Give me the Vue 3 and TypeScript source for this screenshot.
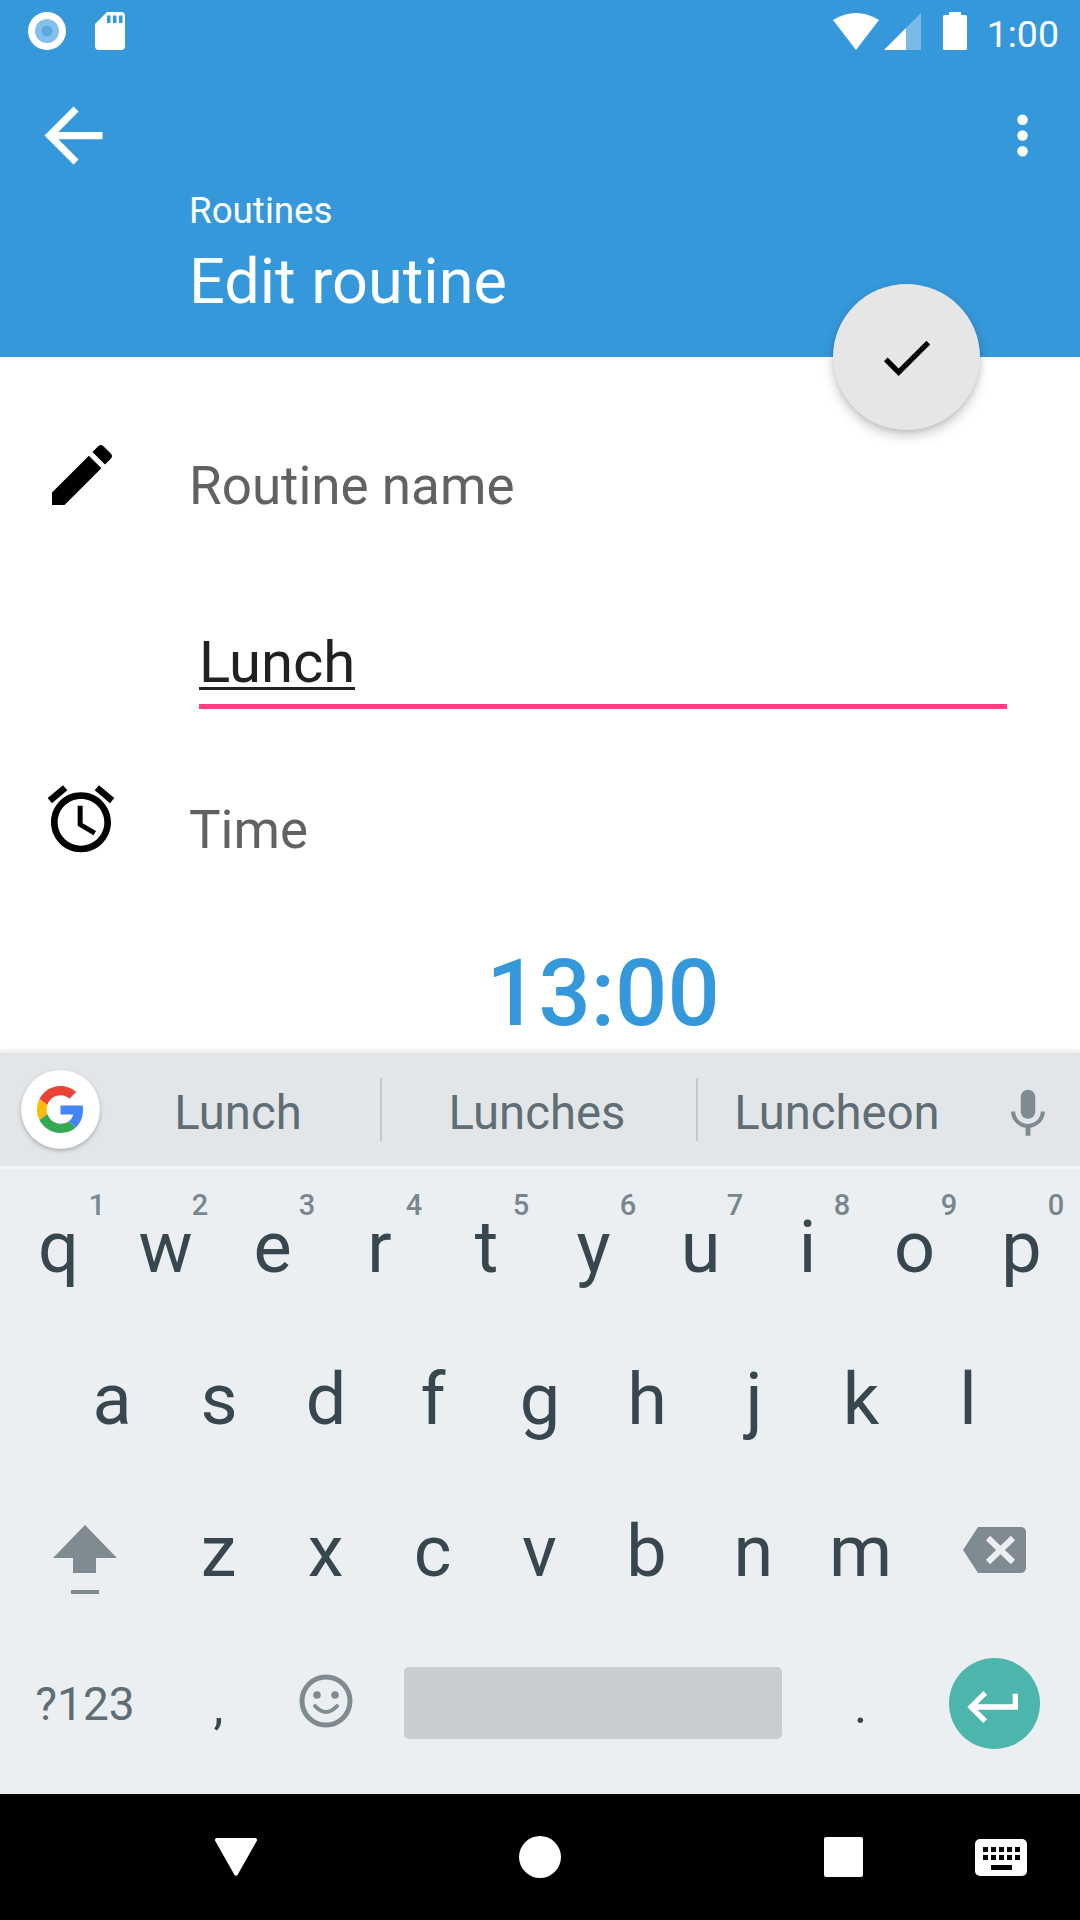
<script setup lang="ts">
const topRow: { l: string; d: string }[] = [
  { l: 'q', d: '1' }, { l: 'w', d: '2' }, { l: 'e', d: '3' }, { l: 'r', d: '4' }, { l: 't', d: '5' },
  { l: 'y', d: '6' }, { l: 'u', d: '7' }, { l: 'i', d: '8' }, { l: 'o', d: '9' }, { l: 'p', d: '0' },
]
const midRow: string[] = ['a', 's', 'd', 'f', 'g', 'h', 'j', 'k', 'l']
const lowRow: string[] = ['z', 'x', 'c', 'v', 'b', 'n', 'm']
</script>

<template>
  <div class="screen">
    <header class="appbar">
      <div class="status">
        <svg class="st-icon rec" width="38" height="38" viewBox="0 0 38 38">
          <circle cx="19" cy="19" r="19" fill="#fff" />
          <circle cx="19" cy="19" r="12" fill="#85bfea" />
          <circle cx="19" cy="19" r="5.5" fill="#5aa9e3" />
        </svg>
        <svg class="st-icon sd" width="30" height="38" viewBox="0 0 30 38">
          <path fill="#fff" d="M12 0H26a4 4 0 0 1 4 4V34a4 4 0 0 1-4 4H4a4 4 0 0 1-4-4V12Z" />
          <path fill="#3498db" d="M12 3.500h3.500V11H12ZM18 3.500h3.500V11H18ZM24 3.500h3.500V11H24Z" />
        </svg>
        <div class="spacer"></div>
        <svg class="st-icon" width="46" height="38" viewBox="0 0 46 38">
          <path fill="#fff" d="M0 8Q23-6 46 8L23 38Z" />
        </svg>
        <svg class="st-icon signal" width="37" height="38" viewBox="0 0 37 38">
          <path fill="#7ab9e8" d="M22 16 37 1V38H22Z" />
          <path fill="#fff" d="M0 38 22 16V38Z" />
        </svg>
        <svg class="st-icon battery" width="24" height="38" viewBox="0 0 24 38">
          <path fill="#fff" d="M6 0H18V3H22.500A1.500 1.500 0 0 1 24 4.500V36.500A1.500 1.500 0 0 1 22.500 38H1.500A1.500 1.500 0 0 1 0 36.500V4.500A1.500 1.500 0 0 1 1.500 3H6Z" />
        </svg>
        <span class="clock">1:00</span>
      </div>
      <div class="toolbar">
        <svg class="back" width="87" height="87" viewBox="0 0 24 24">
          <path fill="#fff" d="M20 11H7.830l5.590-5.590L12 4l-8 8 8 8 1.410-1.410L7.830 13H20v-2z" />
        </svg>
        <div class="spacer"></div>
        <svg class="more" width="63" height="63" viewBox="0 0 24 24">
          <circle cx="12" cy="6" r="2" fill="#fff" />
          <circle cx="12" cy="12" r="2" fill="#fff" />
          <circle cx="12" cy="18" r="2" fill="#fff" />
        </svg>
      </div>
      <div class="titles">
        <div class="crumb">Routines</div>
        <div class="title">Edit routine</div>
      </div>
      <button class="fab" type="button" aria-label="Save">
        <svg width="63" height="63" viewBox="0 0 24 24">
          <path fill="#000" d="M9 16.170L4.830 12l-1.410 1.410L9 19 21 7l-1.410-1.410z" />
        </svg>
      </button>
    </header>

    <main class="form">
      <div class="row name-row">
        <svg class="row-icon" width="80" height="80" viewBox="0 0 24 24">
          <path fill="#000" d="M3 17.250V21h3.750L17.810 9.940l-3.750-3.750L3 17.250zM20.710 7.040c.39-.39.39-1.020 0-1.410l-2.340-2.340c-.39-.39-1.020-.39-1.410 0l-1.830 1.830 3.750 3.750 1.830-1.830z" />
        </svg>
        <span class="label">Routine name</span>
      </div>
      <div class="field"><span class="composing">Lunch</span></div>
      <div class="row time-row">
        <svg class="row-icon" width="80" height="80" viewBox="0 0 24 24">
          <path fill="#000" d="M22 5.720l-4.600-3.860-1.290 1.530 4.600 3.860L22 5.720zM7.880 3.390L6.600 1.860 2 5.710l1.290 1.530 4.590-3.850zM12.500 8H11v6l4.750 2.850.75-1.230-4-2.370V8zM12 4c-4.970 0-9 4.030-9 9s4.030 9 9 9c4.970 0 9-4.030 9-9s-4.030-9-9-9zm0 16c-3.870 0-7-3.130-7-7s3.130-7 7-7 7 3.130 7 7-3.130 7-7 7z" />
        </svg>
        <span class="label">Time</span>
      </div>
      <div class="time-value">13:00</div>
    </main>

    <section class="keyboard">
      <div class="strip">
        <div class="g-btn">
          <svg width="47" height="47" viewBox="0 0 48 48">
            <path fill="#EA4335" d="M24 9.500c3.540 0 6.710 1.220 9.210 3.600l6.850-6.850C35.900 2.380 30.470 0 24 0 14.620 0 6.510 5.380 2.560 13.220l7.980 6.190C12.430 13.720 17.740 9.500 24 9.500z" />
            <path fill="#4285F4" d="M46.980 24.550c0-1.570-.15-3.090-.38-4.550H24v9.020h12.940c-.58 2.960-2.260 5.480-4.780 7.180l7.730 6c4.510-4.180 7.090-10.360 7.090-17.650z" />
            <path fill="#FBBC05" d="M10.530 28.590c-.48-1.450-.76-2.990-.76-4.590s.27-3.140.76-4.590l-7.980-6.190C.92 16.460 0 20.120 0 24c0 3.880.92 7.540 2.560 10.780l7.970-6.190z" />
            <path fill="#34A853" d="M24 48c6.480 0 11.930-2.130 15.890-5.810l-7.730-6c-2.150 1.450-4.920 2.300-8.160 2.300-6.260 0-11.570-4.220-13.470-9.910l-7.980 6.190C6.510 42.620 14.620 48 24 48z" />
          </svg>
        </div>
        <span class="sug sug-a">Lunch</span>
        <i class="divider"></i>
        <span class="sug sug-b">Lunches</span>
        <i class="divider"></i>
        <span class="sug sug-c">Luncheon</span>
        <svg class="mic" width="58" height="58" viewBox="0 0 24 24">
          <path fill="#7f8b90" d="M12 14c1.660 0 2.990-1.340 2.990-3L15 5c0-1.660-1.340-3-3-3S9 3.340 9 5v6c0 1.660 1.340 3 3 3zm5.300-3c0 3-2.540 5.100-5.300 5.100S6.700 14 6.700 11H5c0 3.410 2.720 6.230 6 6.720V21h2v-3.280c3.280-.48 6-3.300 6-6.720h-1.700z" />
        </svg>
      </div>
      <div class="strip-line"></div>

      <div class="keys">
        <div class="key-row">
          <div v-for="k in topRow" :key="k.l" class="key">
            {{ k.l }}<span class="hint">{{ k.d }}</span>
          </div>
        </div>
        <div class="key-row mid">
          <div v-for="k in midRow" :key="k" class="key">{{ k }}</div>
        </div>
        <div class="key-row">
          <div class="key wide">
            <svg class="shift" width="64" height="70" viewBox="0 0 64 70">
              <path fill="#7f8b90" d="M32 0 64 33H43V48H20V33H0Z" />
              <rect x="18" y="65" width="28" height="4" fill="#7f8b90" />
            </svg>
          </div>
          <div v-for="k in lowRow" :key="k" class="key">{{ k }}</div>
          <div class="key wide">
            <svg class="bksp" width="64" height="48" viewBox="0 0 64 48">
              <path fill="#7f8b90" d="M15 1H58a5 5 0 0 1 5 5V42a5 5 0 0 1-5 5H15L0 24Z" />
              <path stroke="#eceff1" stroke-width="6" fill="none" d="M25 12 50 36M50 12 25 36" />
            </svg>
          </div>
        </div>
        <div class="key-row bottom">
          <div class="key wide sym">?123</div>
          <div class="key punct">,</div>
          <div class="key">
            <svg class="emoji" width="56" height="56" viewBox="0 0 56 56">
              <circle cx="28" cy="28" r="24" fill="none" stroke="#7f8b90" stroke-width="5" />
              <circle cx="19" cy="22" r="3.800" fill="#7f8b90" />
              <circle cx="37" cy="22" r="3.800" fill="#7f8b90" />
              <path d="M17 33Q28 45 39 33" fill="none" stroke="#7f8b90" stroke-width="4" stroke-linecap="round" />
            </svg>
          </div>
          <div class="space-key"><div class="space-bar"></div></div>
          <div class="key punct">.</div>
          <div class="key wide">
            <div class="enter">
              <svg width="64" height="64" viewBox="0 0 24 24">
                <path fill="#fff" d="M19 7v4H5.830l3.580-3.590L8 6l-6 6 6 6 1.410-1.410L5.830 13H21V7z" />
              </svg>
            </div>
          </div>
        </div>
      </div>
    </section>

    <nav class="navbar">
      <svg class="nav-back" width="42" height="38" viewBox="0 0 42 38">
        <path fill="#fff" d="M2 0H40a2 2 0 0 1 2 2.500L22.500 37a1.800 1.800 0 0 1-3 0L0 2.500A2 2 0 0 1 2 0Z" />
      </svg>
      <svg class="nav-home" width="42" height="42" viewBox="0 0 42 42">
        <circle cx="21" cy="21" r="21" fill="#fff" />
      </svg>
      <svg class="nav-recent" width="39" height="40" viewBox="0 0 39 40">
        <rect width="39" height="40" rx="2" fill="#fff" />
      </svg>
      <svg class="nav-kb" width="52" height="37" viewBox="0 0 52 37">
        <rect width="52" height="37" rx="5" fill="#fff" />
        <path fill="#000" d="M8 8h5v5H8ZM16 8h5v5h-5ZM24 8h5v5h-5ZM32 8h5v5h-5ZM40 8h5v5h-5ZM8 16h5v5H8ZM16 16h5v5h-5ZM24 16h5v5h-5ZM32 16h5v5h-5ZM40 16h5v5h-5ZM16 26h21v5H16Z" />
      </svg>
    </nav>
  </div>
</template>

<style scoped>
.screen {
  position: relative;
  width: 1080px;
  height: 1920px;
  display: flex;
  flex-direction: column;
  overflow: hidden;
  background: #fff;
  font-family: Roboto, "Liberation Sans", sans-serif;
}
.spacer { flex: 1; }

/* app bar */
.appbar {
  position: relative;
  height: 357px;
  flex-shrink: 0;
  background: #3498db;
  color: #fff;
  z-index: 2;
}
.status {
  height: 72px;
  display: flex;
  align-items: flex-start;
  padding: 0 21px 0 28px;
  box-sizing: border-box;
}
.st-icon { margin-top: 12px; flex-shrink: 0; }
.sd { margin-left: 29px; }
.signal { margin-left: 5px; }
.battery { margin-left: 22px; }
.clock {
  margin: 8px 0 0 20px;
  font-size: 37.500px;
  line-height: 52px;
}
.toolbar {
  height: 112px;
  display: flex;
  align-items: flex-start;
  padding: 0 26px 0 30px;
}
.back { margin-top: 20px; }
.more { margin-top: 32px; }
.titles { margin-left: 189px; padding-top: 2px; }
.crumb { font-size: 36.750px; line-height: 50px; }
.title { font-size: 63px; line-height: 80px; margin-top: 6px; }
.fab {
  position: absolute;
  left: 833px;
  top: 284px;
  width: 147px;
  height: 146px;
  border: 0;
  padding: 0;
  border-radius: 50%;
  background: #e6e6e6;
  box-shadow: 0 6px 12px rgba(0, 0, 0, 0.2), 0 2px 4px rgba(0, 0, 0, 0.08);
  display: flex;
  align-items: center;
  justify-content: center;
}

/* form */
.form { height: 695px; flex-shrink: 0; overflow: hidden; }
.row { display: flex; align-items: flex-start; padding-left: 41px; height: 80px; }
.row-icon { flex-shrink: 0; }
.name-row { margin-top: 78px; padding-left: 42px; }
.time-row { margin-top: 70px; }
.label {
  margin-left: 67px;
  padding-top: 11px;
  font-size: 53px;
  line-height: 80px;
  color: #616161;
}
.time-row .label { padding-top: 11px; margin-left: 68px; }
.field {
  margin: 122px 0 0 199px;
  width: 808px;
  padding-bottom: 14px;
  border-bottom: 5px solid #ff4081;
}
.composing {
  display: inline-block;
  padding: 0;
  font-size: 58px;
  line-height: 50px;
  color: #212121;
  border-bottom: 3px solid #212121;
  vertical-align: top;
}
.time-value {
  margin: 85px 0 0 199px;
  width: 808px;
  text-align: center;
  font-size: 92px;
  line-height: 100px;
  font-weight: 500;
  color: #3498db;
}

/* keyboard */
.keyboard {
  height: 742px;
  flex-shrink: 0;
  padding-top: 1px;
  box-sizing: border-box;
  background: #eceff1;
  box-shadow: 0 -2px 5px rgba(0, 0, 0, 0.08);
  position: relative;
  z-index: 1;
}
.strip {
  height: 113px;
  background: #e3e6e9;
  display: flex;
  align-items: center;
  padding-left: 21px;
}
.g-btn {
  width: 79px;
  height: 79px;
  margin-right: -4px;
  border-radius: 50%;
  background: #fff;
  box-shadow: 0 2px 4px rgba(0, 0, 0, 0.25);
  display: flex;
  align-items: center;
  justify-content: center;
  flex-shrink: 0;
}
.sug {
  font-size: 47.250px;
  line-height: 113px;
  padding-top: 4px;
  box-sizing: border-box;
  height: 113px;
  text-align: center;
  color: #5f6d75;
}
.sug-a { width: 284px; }
.sug-b { width: 314px; padding-right: 4px; }
.sug-c { width: 278px; }
.divider { width: 2px; height: 63px; background: #c3c8cb; flex-shrink: 0; }
.mic { margin: 8px 0 0 23px; flex-shrink: 0; }
.strip-line { height: 3px; background: #f3f5f6; }
.keys { padding: 3px 5px 0; }
.key-row { display: flex; height: 152px; }
.key-row.mid { padding-left: 53.500px; }
.key-row.bottom { height: 150px; align-items: stretch; }
.key {
  position: relative;
  width: 107px;
  flex-shrink: 0;
  display: flex;
  align-items: center;
  justify-content: center;
  font-size: 72px;
  line-height: 152px;
  color: #37474f;
}
.key.wide { width: 160px; }
.hint {
  position: absolute;
  left: 68px;
  top: 18px;
  width: 40px;
  text-align: center;
  font-size: 29px;
  font-weight: 500;
  line-height: 30px;
  color: #78868e;
}
.key:first-child .hint { left: 72px; }
.shift { margin-top: 16px; }
.bksp { margin-top: -5px; margin-left: 2px; }
.sym {
  font-size: 46px;
  line-height: 150px;
  color: #5f6d75;
  padding-top: 2px;
  box-sizing: border-box;
}
.punct {
  font-size: 50px;
  line-height: 150px;
  padding-top: 6px;
  box-sizing: border-box;
}
.emoji { margin-top: -4px; }
.space-key {
  width: 428px;
  flex-shrink: 0;
  display: flex;
  align-items: center;
  justify-content: center;
}
.space-bar {
  width: 378px;
  height: 72px;
  border-radius: 5px;
  background: #c8cdd0;
}
.enter {
  width: 91px;
  height: 91px;
  border-radius: 50%;
  background: #4db6ac;
  display: flex;
  align-items: center;
  justify-content: center;
  padding-top: 8px;
  box-sizing: border-box;
}

/* nav bar */
.navbar {
  height: 126px;
  flex-shrink: 0;
  background: #000;
  display: flex;
  align-items: center;
  padding-left: 215px;
}
.nav-home { margin-left: 262px; }
.nav-recent { margin-left: 263px; }
.nav-kb { margin-left: 112px; }
</style>
